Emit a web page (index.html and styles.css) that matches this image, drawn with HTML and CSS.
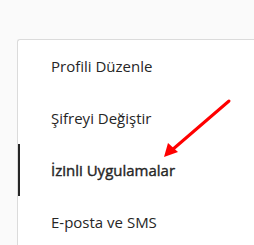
FILE: index.html
```html
<!DOCTYPE html>
<html lang="tr">
<head>
<meta charset="utf-8">
<link rel="stylesheet" href="styles.css">
</head>
<body>
<div class="page">
  <nav class="card">
    <a class="item">Profili Düzenle</a>
    <a class="item">Şifreyi Değiştir</a>
    <a class="item active">İzinli Uygulamalar</a>
    <a class="item">E-posta ve SMS</a>
  </nav>
  <svg class="arrow" width="254" height="245" viewBox="0 0 254 245">
    <line x1="229" y1="101" x2="172" y2="150" stroke="#ff0000" stroke-width="3" stroke-linecap="round"/>
    <polygon points="164,157 168,143 178,152" fill="#ff0000"/>
  </svg>
</div>
</body>
</html>
```
FILE: styles.css
```css
html, body {
  margin: 0;
  padding: 0;
  background: #fafafa;
  overflow: hidden;
}
.page {
  position: relative;
  width: 254px;
  height: 245px;
  padding: 39px 0 0 17px;
  box-sizing: border-box;
  display: flex;
  align-items: flex-start;
}
.card {
  flex: 1;
  min-width: 0;
  background: #fff;
  border: 1px solid #dbdbdb;
  border-right: none;
  border-bottom: none;
  border-radius: 3px 0 0 0;
  display: flex;
  flex-direction: column;
  overflow: hidden;
}
.item {
  display: block;
  height: 52px;
  line-height: 52px;
  padding-left: 31px;
  border-left: 2px solid transparent;
  font-family: "Open Sans", sans-serif;
  font-size: 15px;
  color: #262626;
  white-space: nowrap;
}
.item.active {
  border-left-color: #262626;
  font-weight: 400;
  -webkit-text-stroke: 0.4px #262626;
}
.arrow {
  position: absolute;
  left: 0;
  top: 0;
}
```
